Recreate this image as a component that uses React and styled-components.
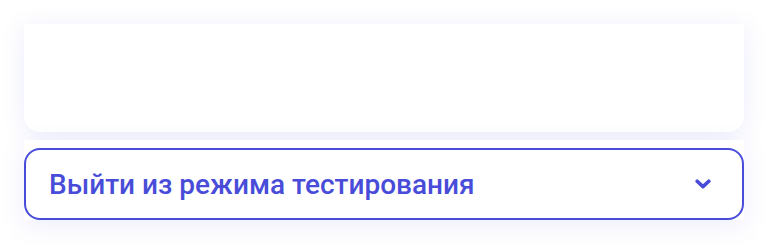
import React from "react";
import styled, { createGlobalStyle } from "styled-components";

const GlobalStyle = createGlobalStyle`
  html, body {
    margin: 0;
    padding: 0;
    background: #ffffff;
  }
  body {
    font-family: Roboto, "Noto Sans", "Liberation Sans", sans-serif;
  }
`;

const Page = styled.div`
  padding: 24px;
  display: flex;
  flex-direction: column;
  gap: 8px;
`;

const Card = styled.div`
  height: 108px;
  background: #ffffff;
  border-radius: 0 0 16px 16px;
  box-shadow: 0 4px 24px rgba(88, 92, 230, 0.12);
`;

const ButtonWrap = styled.div`
  padding-top: 8px;
  background: #ffffff;
  box-shadow: 0 6px 24px rgba(88, 92, 230, 0.1);
`;

const ExitButton = styled.button`
  width: 100%;
  height: 72px;
  box-sizing: border-box;
  display: flex;
  align-items: center;
  justify-content: space-between;
  padding: 0 31px 0 23px;
  background: #ffffff;
  border: 2px solid #484cd9;
  border-radius: 16px;
  color: #484cd9;
  font-family: Roboto, "Noto Sans", sans-serif;
  font-size: 28px;
  font-weight: 500;
  cursor: pointer;
`;

const Chevron = () => (
  <svg width="16" height="10" viewBox="0 0 16 10" fill="none">
    <path
      d="M2.2 2.2L8 7.6L13.8 2.2"
      stroke="#484cd9"
      strokeWidth="3.6"
      strokeLinecap="round"
      strokeLinejoin="round"
    />
  </svg>
);

export default function App() {
  return (
    <>
      <GlobalStyle />
      <Page>
        <Card />
        <ButtonWrap>
          <ExitButton>
            <span>Выйти из режима тестирования</span>
            <Chevron />
          </ExitButton>
        </ButtonWrap>
      </Page>
    </>
  );
}
